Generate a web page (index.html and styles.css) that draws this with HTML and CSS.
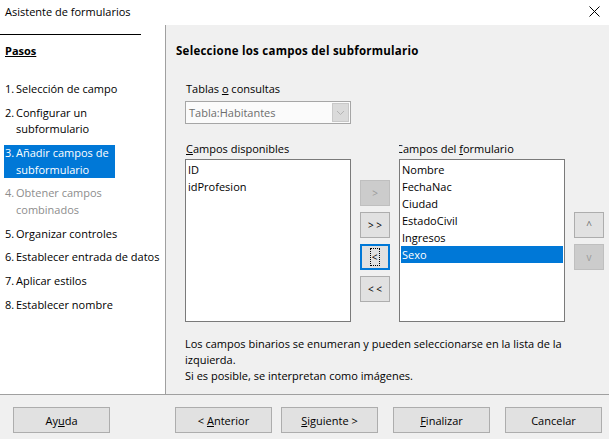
FILE: index.html
```html
<!DOCTYPE html>
<html lang="es">
<head>
<meta charset="utf-8">
<title>Asistente de formularios</title>
<link rel="stylesheet" href="styles.css">
</head>
<body>
<div class="window">
  <div class="titlebar">
    <span class="title">Asistente de formularios</span>
    <svg class="close" width="11" height="11" viewBox="0 0 11 11"><path d="M0.5 0.5 L10.5 10.5 M10.5 0.5 L0.5 10.5" stroke="#000" stroke-width="1" fill="none"/></svg>
  </div>
  <div class="main">
    <div class="steps">
      <div class="steps-rule"></div>
      <div class="steps-title">Pasos</div>
      <ul class="step-list">
        <li class="step"><span class="num">1.</span><span class="txt">Selección de campo</span></li>
        <li class="step"><span class="num">2.</span><span class="txt">Configurar un<br>subformulario</span></li>
        <li class="step current"><span class="num">3.</span><span class="txt">Añadir campos de<br>subformulario</span></li>
        <li class="step disabled"><span class="num">4.</span><span class="txt">Obtener campos<br>combinados</span></li>
        <li class="step"><span class="num">5.</span><span class="txt">Organizar controles</span></li>
        <li class="step"><span class="num">6.</span><span class="txt">Establecer entrada de datos</span></li>
        <li class="step"><span class="num">7.</span><span class="txt">Aplicar estilos</span></li>
        <li class="step"><span class="num">8.</span><span class="txt">Establecer nombre</span></li>
      </ul>
    </div>
    <div class="content">
      <h1 class="heading">Seleccione los campos del subformulario</h1>
      <div class="field">
        <div class="label">Tablas <u>o</u> consultas</div>
        <div class="combo">
          <span class="combo-text">Tabla:Habitantes</span>
          <span class="combo-btn"><svg width="9" height="6" viewBox="0 0 9 6"><path d="M1 1 L4.5 4.5 L8 1" stroke="#b4b4b4" stroke-width="1" fill="none"/></svg></span>
        </div>
      </div>
      <div class="lists">
        <div class="label"><u>C</u>ampos disponibles</div>
        <div></div>
        <div class="label clipped"><span>Campos del <u>f</u>ormulario</span></div>
        <div></div>
        <div class="listbox">
          <div class="item">ID</div>
          <div class="item">idProfesion</div>
        </div>
        <div class="movebtns">
          <div class="btn small disabled"><span>&gt;</span></div>
          <div class="btn small"><span>&gt; &gt;</span></div>
          <div class="btn small focused"><span class="focusrect">&lt;</span></div>
          <div class="btn small"><span>&lt; &lt;</span></div>
        </div>
        <div class="listbox">
          <div class="item">Nombre</div>
          <div class="item">FechaNac</div>
          <div class="item">Ciudad</div>
          <div class="item">EstadoCivil</div>
          <div class="item">Ingresos</div>
          <div class="item selected">Sexo</div>
        </div>
        <div class="orderbtns">
          <div class="btn small light"><span>^</span></div>
          <div class="btn small disabled"><span>v</span></div>
        </div>
      </div>
      <p class="note">Los campos binarios se enumeran y pueden seleccionarse en la lista de la izquierda.<br>Si es posible, se interpretan como imágenes.</p>
    </div>
  </div>
  <div class="footer">
    <div class="btn wide help"><span>Ay<u>u</u>da</span></div>
    <div class="btn wide prev"><span>&lt; <u>A</u>nterior</span></div>
    <div class="btn wide next"><span><u>S</u>iguiente &gt;</span></div>
    <div class="btn wide finish"><span><u>F</u>inalizar</span></div>
    <div class="btn wide cancel"><span>Cancelar</span></div>
  </div>
</div>
</body>
</html>
```

FILE: styles.css
```css
html, body {
  margin: 0;
  padding: 0;
  background: #ffffff;
}
body {
  font-family: "Open Sans", "Noto Sans", sans-serif;
  font-size: 11px;
  color: #000;
}
.window {
  width: 609px;
  height: 439px;
  display: flex;
  flex-direction: column;
  overflow: hidden;
}
.titlebar {
  height: 25px;
  flex: none;
  display: flex;
  align-items: center;
  justify-content: space-between;
  padding: 0 9px 3px 5px;
  box-sizing: border-box;
  background: #fff;
}
.title { line-height: 17px; }
.close { display: block; }
.main {
  flex: 1;
  display: flex;
  min-height: 0;
}
.steps {
  width: 166px;
  flex: none;
  background: #fff;
  border-right: 1px solid #a0a0a0;
  padding-top: 9px;
  box-sizing: border-box;
}
.steps-rule {
  width: 141px;
  height: 1px;
  background: #000;
}
.steps-title {
  margin: 7px 0 0 5px;
  font-weight: bold;
  text-decoration: underline;
  line-height: 17px;
}
.step-list {
  list-style: none;
  margin: 22px 0 0 0;
  padding: 0;
  display: flex;
  flex-direction: column;
  gap: 7.3px;
}
.step {
  display: flex;
  margin-left: 4px;
  line-height: 16.5px;
  width: max-content;
  white-space: nowrap;
}
.step .num { width: 11px; padding-left: 1px; flex: none; }
.step.current {
  background: #0078d7;
  color: #fff;
  width: 111px;
}
.step.disabled { color: #8d8d8d; }
.content {
  flex: 1;
  background: #f0f0f0;
  padding: 17px 0 0 10px;
  box-sizing: border-box;
}
.heading {
  margin: 0;
  font-size: 11.5px;
  letter-spacing: 0.25px;
  font-weight: bold;
  line-height: 17px;
}
.field {
  margin: 21px 0 0 9px;
  width: 166px;
}
.label { line-height: 17px; padding-left: 1px; }
.combo {
  margin-top: 4px;
  height: 23px;
  box-sizing: border-box;
  border: 1px solid #a6a6a6;
  background: #fbfbfb;
  display: flex;
  align-items: center;
  justify-content: space-between;
  padding: 0 1px 0 3px;
  color: #6d6d6d;
}
.combo-btn {
  width: 17px;
  height: 19px;
  background: #dadada;
  border: 1px solid #c8c8c8;
  box-sizing: border-box;
  display: flex;
  align-items: center;
  justify-content: center;
}
.combo-btn svg { display: block; }
.lists {
  margin: 16px 0 0 9px;
  display: grid;
  grid-template-columns: 166px 30px 166px 30px;
  grid-template-rows: 19px 163px;
  column-gap: 9px;
}
.clipped {
  overflow: hidden;
  white-space: nowrap;
  padding-left: 0;
}
.clipped span { margin-left: -3px; }
.listbox {
  background: #fff;
  border: 1px solid #7a7a7a;
  padding: 1px;
  box-sizing: border-box;
}
.item {
  line-height: 17px;
  padding-left: 1px;
}
.item.selected {
  background: #0078d7;
  color: #fff;
}
.movebtns, .orderbtns {
  display: flex;
  flex-direction: column;
  gap: 6px;
  padding-top: 21px;
}
.orderbtns { padding-top: 53px; }
.btn {
  background: #e1e1e1;
  border: 1px solid #adadad;
  box-sizing: border-box;
  display: flex;
  align-items: center;
  justify-content: center;
  color: #000;
  white-space: pre;
}
.btn.small {
  width: 30px;
  height: 26px;
  font-size: 10px;
}
.btn.disabled {
  background: #cccccc;
  border-color: #bfbfbf;
  color: #9a9a9a;
}
.btn.light { color: #6d6d6d; }
.btn.focused {
  border: 2px solid #0078d7;
}
.focusrect {
  border: 1px dotted #000;
  line-height: 16px;
  padding: 0 2px 0 1px;
}
.note {
  margin: 14px 0 0 9px;
  line-height: 16px;
  width: 400px;
}
.footer {
  height: 45px;
  flex: none;
  background: #f0f0f0;
  border-top: 1px solid #a0a0a0;
  box-sizing: border-box;
  display: flex;
  align-items: flex-start;
  padding: 12px 0 0 13px;
}
.btn.wide {
  width: 97px;
  height: 26px;
}
.prev { margin-left: 65px; }
.next { margin-left: 9px; }
.finish { margin-left: 15px; }
.cancel { margin-left: 15px; }
```
